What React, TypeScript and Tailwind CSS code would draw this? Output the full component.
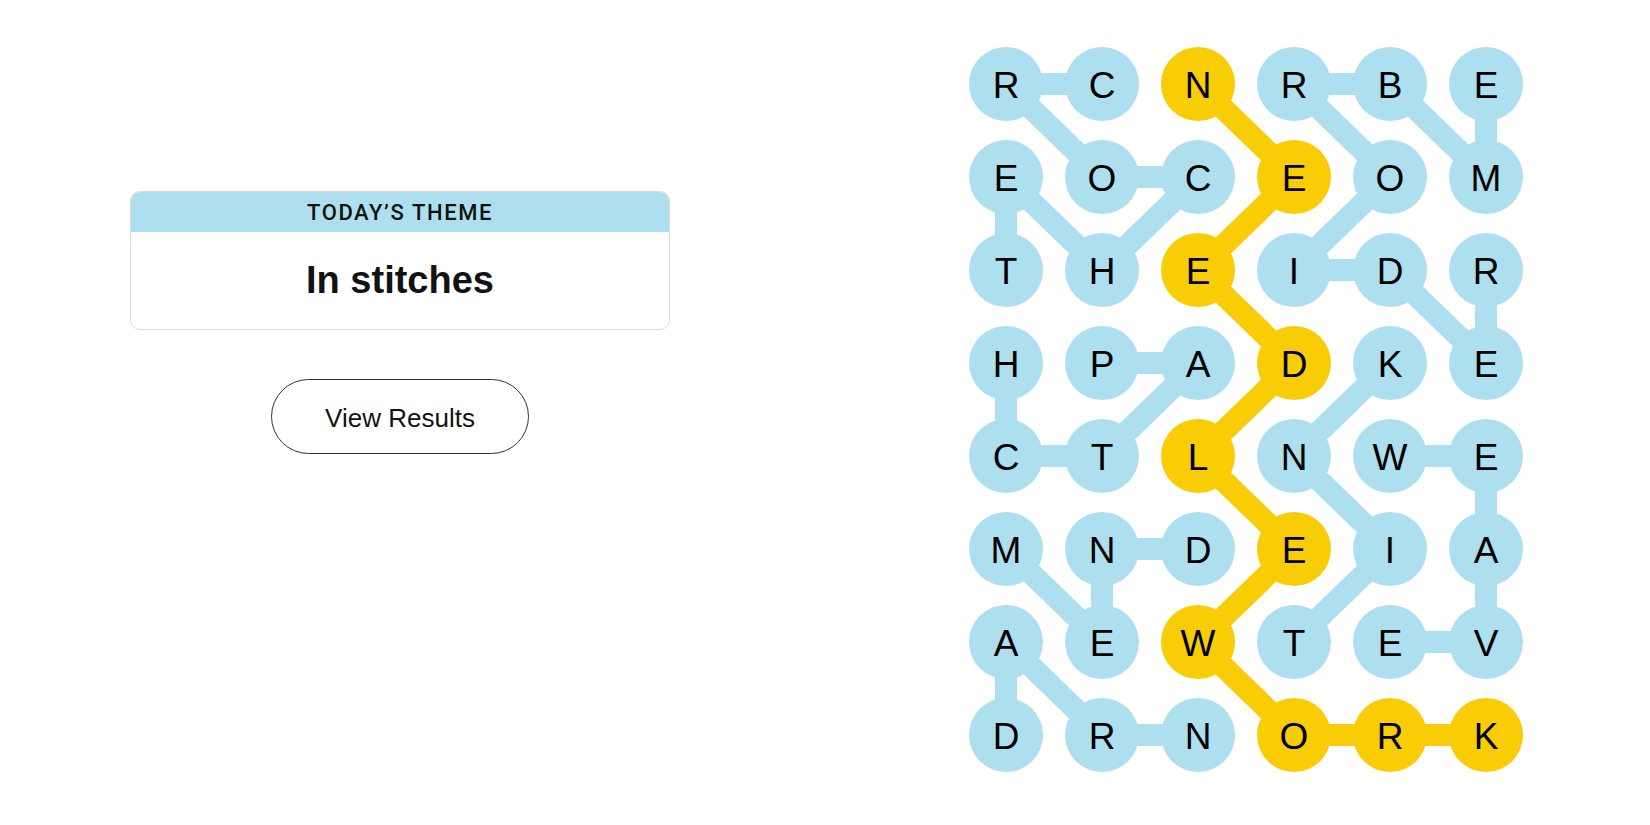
import React from 'react';

const letters = [
  'RCNRBE',
  'EOCEOM',
  'THEIDR',
  'HPADKE',
  'CTLNWE',
  'MNDEIA',
  'AEWTEV',
  'DRNORK',
];

type Cell = [number, number];

const spangram: Cell[] = [
  [0, 2], [1, 3], [2, 2], [3, 3], [4, 2], [5, 3], [6, 2], [7, 3], [7, 4], [7, 5],
];

const words: Cell[][] = [
  [[0, 1], [0, 0], [1, 1], [1, 2], [2, 1], [1, 0], [2, 0]],
  [[0, 5], [1, 5], [0, 4], [0, 3], [1, 4], [2, 3], [2, 4], [3, 5], [2, 5]],
  [[3, 1], [3, 2], [4, 1], [4, 0], [3, 0]],
  [[3, 4], [4, 3], [5, 4], [6, 3]],
  [[4, 4], [4, 5], [5, 5], [6, 5], [6, 4]],
  [[5, 0], [6, 1], [5, 1], [5, 2]],
  [[7, 0], [6, 0], [7, 1], [7, 2]],
];

const BLUE = '#aedfee';
const YELLOW = '#f8cd05';

const cx = (c: number) => 37 + c * 96;
const cy = (r: number) => 37 + r * 93;

const toPoints = (path: Cell[]) => path.map(([r, c]) => `${cx(c)},${cy(r)}`).join(' ');

const isYellow = (r: number, c: number) => spangram.some(([a, b]) => a === r && b === c);

const Board: React.FC = () => {
  return (
    <div className="relative w-[554px] h-[725px]">
      <svg className="absolute inset-0" width="554" height="725" viewBox="0 0 554 725">
        {words.map((w, i) => (
          <polyline key={i} points={toPoints(w)} fill="none" stroke={BLUE} strokeWidth={22} strokeLinejoin="round" />
        ))}
        <polyline points={toPoints(spangram)} fill="none" stroke={YELLOW} strokeWidth={22} strokeLinejoin="round" />
      </svg>
      <div className="relative grid grid-cols-[repeat(6,74px)] gap-x-[22px] gap-y-[19px]">
        {letters.map((row, r) =>
          row.split('').map((ch, c) => (
            <div
              key={`${r}-${c}`}
              className={`w-[74px] h-[74px] rounded-full flex items-center justify-center pt-[3px] text-[37px] text-black font-['Liberation_Sans',Arial,sans-serif] ${
                isYellow(r, c) ? 'bg-[#f8cd05]' : 'bg-[#aedfee]'
              }`}
            >
              {ch}
            </div>
          ))
        )}
      </div>
    </div>
  );
};

export default function App() {
  return (
    <div className="flex w-full h-[825px] bg-white font-['Liberation_Sans',Arial,sans-serif]">
      <div className="w-[800px] flex flex-col items-center pt-[191px]">
        <div className="w-[540px] rounded-[10px] border border-[#dcdcdc] overflow-hidden">
          <div className="h-[40px] bg-[#aedfee] flex items-center justify-center font-['Roboto',sans-serif] font-medium text-[22px] tracking-[1.6px] text-[#121212]">
            TODAY’S THEME
          </div>
          <div className="h-[97px] flex items-center justify-center font-bold text-[38px] text-[#121212]">
            In stitches
          </div>
        </div>
        <button className="mt-[49px] w-[258px] h-[75px] rounded-full border border-[#333] pt-[3px] text-[26px] text-[#121212] bg-white">
          View Results
        </button>
      </div>
      <div className="pl-[169px] pt-[47px]">
        <Board />
      </div>
    </div>
  );
}
